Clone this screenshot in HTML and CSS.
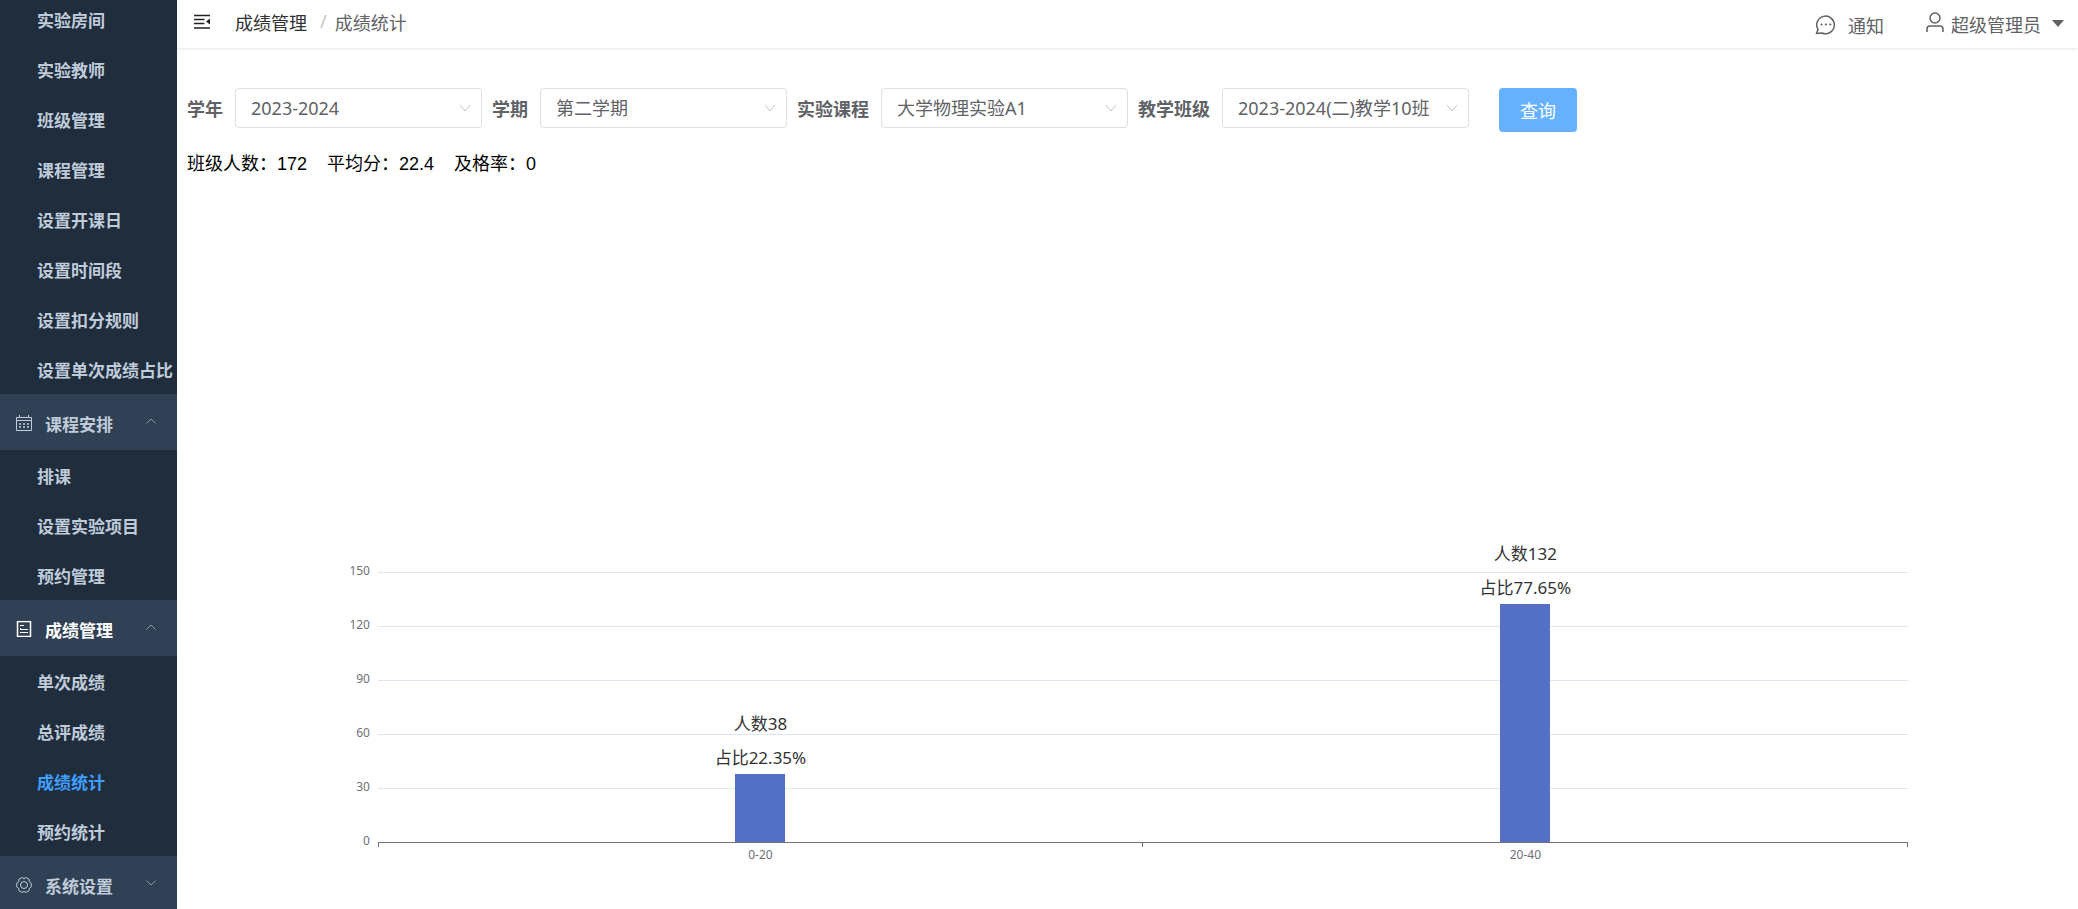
FILE: index.html
```html
<!DOCTYPE html>
<html lang="zh-CN">
<head>
<meta charset="utf-8">
<title>成绩统计</title>
<link rel="stylesheet" href="styles.css">
</head>
<body>
<div class="app">
  <nav class="sidebar">
    <ul class="menu">
      <li><a class="item" href="#">实验房间</a></li>
      <li><a class="item" href="#">实验教师</a></li>
      <li><a class="item" href="#">班级管理</a></li>
      <li><a class="item" href="#">课程管理</a></li>
      <li><a class="item" href="#">设置开课日</a></li>
      <li><a class="item" href="#">设置时间段</a></li>
      <li><a class="item" href="#">设置扣分规则</a></li>
      <li><a class="item" href="#">设置单次成绩占比</a></li>
    </ul>
    <button class="group" type="button">
      <svg class="group-icon" viewBox="0 0 16 16"><path d="M.5 2.5h15v13H.5zM.5 5.500h15M3.500 0v3M12.500 0v3"/><path d="M3 9h2M7 9h2M11 9h2M3 12h2M7 12h2M11 12h2" stroke-width="1.500"/></svg>
      <span>课程安排</span>
      <svg class="arrow" viewBox="0 0 10 6"><path d="M.5 5.500 5 1l4.500 4.500"/></svg>
    </button>
    <ul class="menu">
      <li><a class="item" href="#">排课</a></li>
      <li><a class="item" href="#">设置实验项目</a></li>
      <li><a class="item" href="#">预约管理</a></li>
    </ul>
    <button class="group current" type="button">
      <svg class="group-icon" viewBox="0 0 16 16"><path d="M1.500 .5h13v15h-13z" stroke-width="1.500"/><path d="M4 4.500h4M4 8.500h8M4 11.500h8M4.500 7v1"/></svg>
      <span>成绩管理</span>
      <svg class="arrow" viewBox="0 0 10 6"><path d="M.5 5.500 5 1l4.500 4.500"/></svg>
    </button>
    <ul class="menu">
      <li><a class="item" href="#">单次成绩</a></li>
      <li><a class="item" href="#">总评成绩</a></li>
      <li><a class="item active" href="#">成绩统计</a></li>
      <li><a class="item" href="#">预约统计</a></li>
    </ul>
    <button class="group" type="button">
      <svg class="group-icon" viewBox="0 0 16 16"><path d="M5.800 .6q2.200 1.800 4.400 0l2.800 1.600q-.4 2.900 2.300 4v3.600q-2.700 1.100-2.300 4l-2.800 1.600q-2.200-1.800-4.400 0L3 13.800q.4-2.900-2.300-4V6.200q2.700-1.100 2.300-4z"/><circle cx="8" cy="8" r="3.500"/></svg>
      <span>系统设置</span>
      <svg class="arrow" viewBox="0 0 10 6"><path d="M.5 .5 5 5 9.500 .5"/></svg>
    </button>
  </nav>

  <div class="page">
    <header class="topbar">
      <button class="fold" type="button" aria-label="收起菜单">
        <svg viewBox="0 0 18 16"><path d="M1 1.500h16M1 5.500h10.500M1 9.500h10.500M1 14h16" fill="none" stroke="#222" stroke-width="1.500"/><path d="M17 4.500v6l-4-3z" fill="#222"/></svg>
      </button>
      <div class="crumbs"><a href="#">成绩管理</a><span class="slash">/</span><span>成绩统计</span></div>
      <div class="tools">
        <button class="tool notice" type="button">
          <svg class="chat" viewBox="0 0 22 20"><path d="M1.500 18.500 3 14.500A8.800 8.800 0 1 1 7 18z"/><path d="M6.500 9.500h9.500" stroke-width="2" stroke-linecap="round" stroke-dasharray=".1 4.300"/></svg>
          <span>通知</span>
        </button>
        <button class="tool" type="button">
          <svg class="person" viewBox="0 0 18 20"><circle cx="9" cy="6" r="5"/><path d="M1 20v-3q0-3 3-3h10q3 0 3 3v3"/></svg>
          <span>超级管理员</span>
          <svg class="caret" viewBox="0 0 12 7"><path d="M0 0h12L6 7z"/></svg>
        </button>
      </div>
    </header>

    <main class="content">
      <form class="filters">
        <div class="field"><label for="year">学年</label><span class="box"><select id="year"><option>2023-2024</option></select><svg viewBox="0 0 12 8"><path d="M1 1l5 6 5-6"/></svg></span></div>
        <div class="field"><label for="term">学期</label><span class="box"><select id="term"><option>第二学期</option></select><svg viewBox="0 0 12 8"><path d="M1 1l5 6 5-6"/></svg></span></div>
        <div class="field"><label for="course">实验课程</label><span class="box"><select id="course"><option>大学物理实验A1</option></select><svg viewBox="0 0 12 8"><path d="M1 1l5 6 5-6"/></svg></span></div>
        <div class="field"><label for="klass">教学班级</label><span class="box"><select id="klass"><option>2023-2024(二)教学10班</option></select><svg viewBox="0 0 12 8"><path d="M1 1l5 6 5-6"/></svg></span></div>
        <button class="query" type="button">查询</button>
      </form>

      <div class="stats"><span>班级人数：172</span><span>平均分：22.4</span><span>及格率：0</span></div>

      <section class="chart">
        <div class="scale">
          <span>150</span><span>120</span><span>90</span><span>60</span><span>30</span><span>0</span>
        </div>
        <div class="plot">
          <div class="lines"><i></i><i></i><i></i><i></i><i></i></div>
          <div class="bars">
            <div class="slot"><p>人数38<br>占比22.35%</p><div class="bar" style="height:25.33%"></div></div>
            <div class="slot"><p>人数132<br>占比77.65%</p><div class="bar" style="height:88%"></div></div>
          </div>
          <div class="axis"><span>0-20</span><span>20-40</span></div>
        </div>
      </section>
    </main>
  </div>
</div>
</body>
</html>
```
FILE: styles.css
```css
* { box-sizing: border-box; }
body {
  margin: 0;
  font-family: "Noto Sans", "Noto Sans CJK SC", sans-serif;
  font-size: 18px;
  color: #606266;
  background: #fff;
}
button, select { font: inherit; color: inherit; border: 0; background: none; padding: 0; }
a { color: inherit; text-decoration: none; }
svg { display: block; flex: none; }
.app { display: flex; height: 100vh; overflow: hidden; }

.sidebar {
  width: 177px;
  flex: none;
  overflow: hidden;
  background: #304156;
  color: #bfcbd9;
  font-family: "Noto Sans CJK SC", sans-serif;
  font-size: 17px;
  font-weight: bold;
}
.menu { margin: 0; padding: 0; list-style: none; background: #1f2d3d; }
.menu:first-child { margin-top: -6px; }
.item { display: block; height: 50px; line-height: 52px; padding-left: 37px; white-space: nowrap; }
.item.active { color: #409eff; }
.group {
  display: flex;
  align-items: center;
  width: 100%;
  height: 56px;
  padding: 2px 21px 0 16px;
}
.group.current { color: #fff; }
.group-icon { width: 16px; height: 16px; margin-right: 13px; fill: none; stroke: currentColor; }
.arrow { width: 10px; height: 6px; margin: 0 0 4px auto; fill: none; stroke: #909399; }

.page { flex: 1; min-width: 0; display: flex; flex-direction: column; }
.topbar {
  display: flex;
  align-items: center;
  height: 48px;
  flex: none;
  padding: 0 14px 5px 16px;
  box-shadow: 0 1px 3px rgba(0, 0, 0, .1);
}
.fold svg { width: 18px; height: 16px; }
.crumbs { display: flex; margin-left: 24px; }
.crumbs a { color: #303133; }
.slash { margin: 0 8px 0 13px; color: #c0c4cc; }
.tools { display: flex; gap: 42px; margin-left: auto; padding-top: 4px; }
.tool { display: flex; align-items: center; }
.tool svg { fill: none; stroke: #606266; stroke-width: 1.5; }
.notice { padding-top: 2px; }
.tool .chat { width: 22px; height: 20px; margin-right: 11px; }
.tool .person { width: 18px; height: 20px; margin: 0 7px 4px 0; }
.tool .caret { width: 12px; height: 7px; margin-left: 11px; fill: #606266; stroke: none; }

.content { flex: 1; display: flex; flex-direction: column; padding: 40px 0 0 10px; }
.filters { display: flex; align-items: flex-start; gap: 10px; }
.field { display: flex; align-items: center; gap: 12px; height: 40px; }
.field label { font-weight: bold; white-space: nowrap; }
.box { display: grid; width: 247px; align-items: center; }
.box select, .box svg { grid-area: 1 / 1; }
.box select {
  appearance: none;
  width: 100%;
  height: 40px;
  padding: 0 30px 0 15px;
  border: 1px solid #dcdfe6;
  border-radius: 4px;
  background: #fff;
}
.box svg { width: 12px; height: 8px; margin-right: 11px; justify-self: end; pointer-events: none; fill: none; stroke: #c0c4cc; }
.query { height: 44px; margin-left: 20px; padding: 0 21px; border-radius: 4px; background: #66b1ff; color: #fff; }
.stats {
  display: flex;
  gap: 20px;
  margin-top: 19px;
  line-height: 26px;
  color: #000;
  font-family: "Liberation Sans", "Noto Sans CJK SC", sans-serif;
}

.chart {
  flex: 1;
  display: grid;
  grid-template-columns: 10.1% 1fr 9%;
  align-content: end;
  padding-bottom: 43px;
  font-size: 12px;
  line-height: 18px;
  color: #6e7079;
}
.scale { display: flex; flex-direction: column; justify-content: space-between; height: 288px; margin-top: -10px; padding-right: 8px; text-align: right; }
.plot { position: relative; }
.lines { height: 270px; }
.lines i { display: block; height: 54px; border-top: 1px solid #e0e6f1; }
.bars { position: absolute; inset: 0 0 auto; display: flex; height: 270px; }
.slot { flex: 1; display: flex; flex-direction: column; justify-content: flex-end; align-items: center; }
.slot p { flex: none; margin: 0 0 -1px; font-size: 17px; line-height: 34px; text-align: center; color: #333; }
.bar { flex: none; width: 50px; background: #5470c6; }
.axis {
  display: flex;
  height: 24px;
  padding-top: 3px;
  text-align: center;
  border-top: 1px solid #6e7079;
  background:
    linear-gradient(#6e7079, #6e7079) left top / 1px 4px no-repeat,
    linear-gradient(#6e7079, #6e7079) center top / 1px 4px no-repeat,
    linear-gradient(#6e7079, #6e7079) right top / 1px 4px no-repeat;
}
.axis span { flex: 1; }
```
